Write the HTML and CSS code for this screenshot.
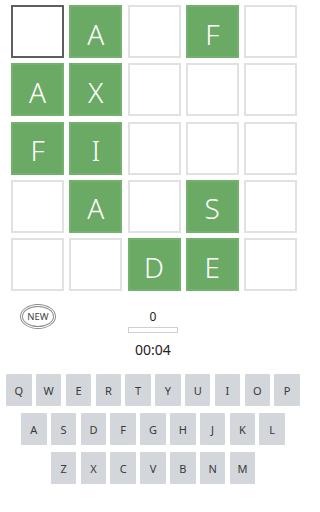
FILE: index.html
```html
<!DOCTYPE html>
<html lang="en">
<head>
<meta charset="utf-8">
<title>Word Grid</title>
<link rel="stylesheet" href="styles.css">
</head>
<body>
<div class="app">
  <div class="board">
    <div class="tile active"></div>
    <div class="tile filled">A</div>
    <div class="tile"></div>
    <div class="tile filled">F</div>
    <div class="tile"></div>

    <div class="tile filled">A</div>
    <div class="tile filled">X</div>
    <div class="tile"></div>
    <div class="tile"></div>
    <div class="tile"></div>

    <div class="tile filled">F</div>
    <div class="tile filled">I</div>
    <div class="tile"></div>
    <div class="tile"></div>
    <div class="tile"></div>

    <div class="tile"></div>
    <div class="tile filled">A</div>
    <div class="tile"></div>
    <div class="tile filled">S</div>
    <div class="tile"></div>

    <div class="tile"></div>
    <div class="tile"></div>
    <div class="tile filled">D</div>
    <div class="tile filled">E</div>
    <div class="tile"></div>
  </div>

  <div class="controls">
    <div class="controls-left">
      <button class="new-btn">NEW</button>
    </div>
    <div class="controls-center">
      <div class="score">0</div>
      <div class="progress"></div>
      <div class="timer">00:04</div>
    </div>
    <div class="controls-right"></div>
  </div>

  <div class="keyboard">
    <div class="kb-row">
      <div class="key">Q</div><div class="key">W</div><div class="key">E</div><div class="key">R</div><div class="key">T</div><div class="key">Y</div><div class="key">U</div><div class="key">I</div><div class="key">O</div><div class="key">P</div>
    </div>
    <div class="kb-row">
      <div class="key">A</div><div class="key">S</div><div class="key">D</div><div class="key">F</div><div class="key">G</div><div class="key">H</div><div class="key">J</div><div class="key">K</div><div class="key">L</div>
    </div>
    <div class="kb-row">
      <div class="key">Z</div><div class="key">X</div><div class="key">C</div><div class="key">V</div><div class="key">B</div><div class="key">N</div><div class="key">M</div>
    </div>
  </div>
</div>
</body>
</html>
```

FILE: styles.css
```css
* {
  box-sizing: border-box;
}

body {
  margin: 0;
  background: #ffffff;
  font-family: "Noto Sans", "Open Sans", sans-serif;
  color: #222;
}

.app {
  width: 306px;
}

.board {
  display: grid;
  grid-template-columns: repeat(5, 53px);
  grid-auto-rows: 53px;
  gap: 5.25px;
  margin: 5px 0 0 11px;
}

.tile {
  border: 2px solid #e1e1e1;
  background: #fff;
  display: flex;
  align-items: center;
  justify-content: center;
  padding-top: 4px;
  color: #fff;
  font-size: 28px;
  font-weight: 300;
  line-height: 1;
}

.tile.filled {
  background: #6aaa64;
  border-color: #74b06e;
}

.tile.active {
  border-color: #5e5e5e;
}

.controls {
  display: grid;
  grid-template-columns: 1fr 1fr 1fr;
  height: 67px;
}

.controls-left {
  padding: 13px 0 0 20px;
}

.new-btn {
  width: 36px;
  height: 25px;
  padding: 0;
  border: 3px double #8c8c8c;
  border-radius: 50%;
  background: #fff;
  font-family: "Noto Sans", sans-serif;
  font-size: 9.5px;
  color: #444;
  display: flex;
  align-items: center;
  justify-content: center;
}

.controls-center {
  display: flex;
  flex-direction: column;
  align-items: center;
  padding-top: 18px;
}

.score {
  font-size: 12px;
  line-height: 16px;
  color: #222;
}

.progress {
  width: 50px;
  height: 6px;
  border: 1px solid #cfcfcf;
  background: #fff;
  margin-top: 2px;
}

.timer {
  font-size: 14px;
  line-height: 19px;
  margin-top: 7px;
  color: #222;
}

.keyboard {
  display: flex;
  flex-direction: column;
  gap: 7px;
  padding-top: 16px;
}

.kb-row {
  display: flex;
  justify-content: center;
  gap: 4.3px;
}

.key {
  width: 25.5px;
  height: 32px;
  background: #d3d6da;
  border-radius: 1px;
  display: flex;
  align-items: center;
  justify-content: center;
  font-size: 11px;
  color: #3a3a3a;
}
```
